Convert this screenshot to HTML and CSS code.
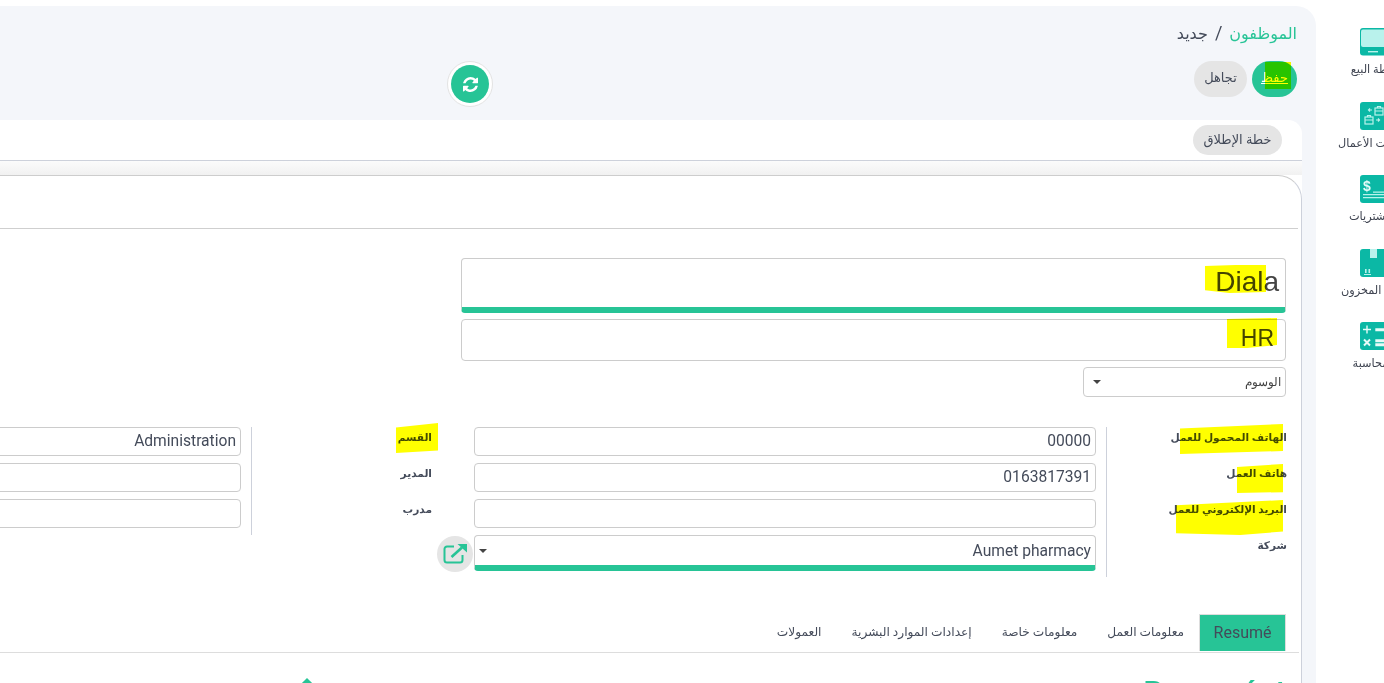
FILE: index.html
```html
<!DOCTYPE html>
<html lang="ar" dir="rtl">
<head>
<meta charset="utf-8">
<title>الموظفون</title>
<link rel="stylesheet" href="styles.css">
</head>
<body>
<div class="app">
  <nav class="side">
    <a class="app-item">
      <svg class="app-icon" viewBox="0 0 28 28"><rect width="28" height="27.500" rx="3" fill="#0bb8a5"/><rect x="1" y="1.500" width="26" height="17.500" rx="2" fill="#b9f2ec"/><rect x="8" y="23" width="10" height="1.400" fill="#b9f2ec"/></svg>
      <span>نقطة البيع</span>
    </a>
    <a class="app-item">
      <svg class="app-icon" viewBox="0 0 28 28"><rect width="28" height="28" rx="3" fill="#0bb8a5"/><g fill="none" stroke="#b9f2ec" stroke-width="1.200"><rect x="15" y="6" width="8" height="7"/><path d="M15 9h8M17.500 6V4.500h3V6"/><rect x="5" y="15" width="8" height="7"/><path d="M5 18h8M7.500 15v-1.500h3V15"/><path d="M12 8H8.500M10 6.500 8.500 8 10 9.500M16 18h3.500M18 16.500 19.500 18 18 19.500"/></g></svg>
      <span>عمليات الأعمال</span>
    </a>
    <a class="app-item">
      <svg class="app-icon" viewBox="0 0 28 28"><rect width="28" height="28" rx="3" fill="#0bb8a5"/><text class="dollar" x="3" y="16">$</text><path d="M3 19h22v1.300H3zM3 22h22v1.300H3zM13 16.500h12v1.300H13z" fill="#b9f2ec"/></svg>
      <span>المشتريات</span>
    </a>
    <a class="app-item">
      <svg class="app-icon" viewBox="0 0 28 28"><rect width="28" height="28" rx="3" fill="#0bb8a5"/><rect x="10" width="7" height="9" fill="#b9f2ec"/><path d="M5 20h1.600v4H5zM8.500 20h1.600v4H8.500zM4 25h7v1H4z" fill="#b9f2ec"/></svg>
      <span>إدارة المخزون</span>
    </a>
    <a class="app-item">
      <svg class="app-icon" viewBox="0 0 28 28"><rect width="28" height="28" rx="3" fill="#0bb8a5"/><path d="M7 3.500v8M3 7.500h8M16 7h9v1.600h-9zM16 18h9v1.600h-9zM16 22h9v1.600h-9z" stroke="#e5fbf8" stroke-width="1.400" fill="#e5fbf8"/><path d="M4 17.500l6 6M10 17.500l-6 6" stroke="#e5fbf8" stroke-width="2"/></svg>
      <span>المحاسبة</span>
    </a>
  </nav>

  <main class="panel">
    <header class="control">
      <h1 class="crumbs"><span class="crumb-link">الموظفون</span><span class="crumb-sep">/</span>جديد</h1>
      <div class="actions">
        <button class="pill pill-save">حفظ</button>
        <button class="pill pill-ghost">تجاهل</button>
        <button class="refresh">
          <svg viewBox="0 0 1536 1536" width="15" height="15"><path fill="#fff" d="M1511 928q0 5-1 7-64 268-268 434.500t-478 166.500q-146 0-282.500-55t-243.500-157l-129 129q-19 19-45 19t-45-19-19-45v-448q0-26 19-45t45-19h448q26 0 45 19t19 45-19 45l-137 137q71 66 161 102t187 36q134 0 250-65t186-179q11-17 53-117 8-23 30-23h192q13 0 22.500 9.500t9.500 22.500zm25-800v448q0 26-19 45t-45 19h-448q-26 0-45-19t-19-45 19-45l138-138q-148-137-349-137-134 0-250 65t-186 179q-11 17-53 117-8 23-30 23h-199q-13 0-22.500-9.500t-9.500-22.500v-7q65-268 270-434.500t480-166.500q146 0 284 55.500t245 156.500l130-129q19-19 45-19t45 19 19 45z"/></svg>
        </button>
      </div>
    </header>

    <section class="card">
      <div class="statusbar"><button class="pill-plan">خطة الإطلاق</button></div>
      <div class="strip">
        <div class="sheet">
          <div class="sheet-head"></div>
          <div class="sheet-body">
            <div class="field field-name">Diala</div>
            <div class="field field-job">HR</div>
            <div class="field field-tags"><span class="caret"></span><span>الوسوم</span></div>

            <div class="groups">
              <div class="group">
                <div class="labels">
                  <div class="lab">الهاتف المحمول للعمل</div>
                  <div class="lab">هاتف العمل</div>
                  <div class="lab">البريد الإلكتروني للعمل</div>
                  <div class="lab lab-tall">شركة</div>
                </div>
                <div class="inputs">
                  <div class="input">00000</div>
                  <div class="input">0163817391</div>
                  <div class="input"></div>
                  <div class="input input-company">
                    <span class="caret"></span><span>Aumet pharmacy</span>
                    <button class="open-link">
                      <svg viewBox="0 0 24 20" width="24" height="20"><path d="M11 2.500H4a2.500 2.500 0 0 0-2.500 2.500v11A2.500 2.500 0 0 0 4 18.500h13a2.500 2.500 0 0 0 2.500-2.500v-5" fill="none" stroke="#27c496" stroke-width="2"/><path d="M8.500 13 19 3.500" stroke="#27c496" stroke-width="2.600"/><path d="M14.500 0H24v8.500z" fill="#27c496"/></svg>
                    </button>
                  </div>
                </div>
              </div>
              <div class="group group-second">
                <div class="labels">
                  <div class="lab">القسم</div>
                  <div class="lab">المدير</div>
                  <div class="lab">مدرب</div>
                </div>
                <div class="inputs">
                  <div class="input">Administration</div>
                  <div class="input"></div>
                  <div class="input"></div>
                </div>
              </div>
            </div>

            <div class="tabs">
              <a class="tab tab-active">Resumé</a>
              <a class="tab">معلومات العمل</a>
              <a class="tab">معلومات خاصة</a>
              <a class="tab">إعدادات الموارد البشرية</a>
              <a class="tab">العمولات</a>
            </div>

            <div class="resume-row">
              <h2 class="resume-title">Resumént</h2>
              <span class="resume-mark"></span>
            </div>
          </div>
        </div>
      </div>
    </section>
  </main>
</div>

<div class="marks">
  <i class="mark mark-save"></i>
  <i class="mark mark-name"></i>
  <i class="mark mark-job"></i>
  <i class="mark mark-l1"></i>
  <i class="mark mark-l2"></i>
  <i class="mark mark-l3"></i>
  <i class="mark mark-dept"></i>
</div>
</body>
</html>
```
FILE: styles.css
```css
html, body { margin: 0; padding: 0; height: 683px; overflow: hidden; background: #fff; }
body { font-family: Roboto, "Liberation Sans", "DejaVu Sans", sans-serif; color: #444b5a; font-size: 13px; }
button { font-family: inherit; border: 0; padding: 0; cursor: pointer; }
h1, h2 { margin: 0; font-weight: 400; }

.app { display: flex; width: 1384px; height: 683px; overflow: hidden; }

/* app launcher column, cut by the window edge */
.side { flex: none; width: 68px; height: 683px; overflow: hidden; direction: ltr; padding-top: 28px; box-sizing: border-box; }
.app-item { display: flex; flex-direction: column; align-items: center; width: 116px; height: 73.5px; direction: rtl; }
.app-icon { width: 28px; height: 28px; flex: none; }
.app-item span { font-size: 11.300px; line-height: 14px; margin-top: 7px; white-space: nowrap; color: #3e4350; }
.dollar { font: 700 14px "Liberation Sans", sans-serif; fill: #e5fbf8; direction: ltr; }

.panel { flex: none; width: 1716px; margin-top: 6px; height: 677px; background: #f4f6fa; border-top-right-radius: 20px; overflow: hidden; }

.control { height: 114px; padding-right: 19px; box-sizing: border-box; }
.crumbs { font-size: 16px; line-height: 24px; padding-top: 15px; color: #444b5a; }
.crumb-link { color: #27c496; }
.crumb-sep { margin: 0 7px; font-size: 18px; }
.actions { display: flex; align-items: flex-start; margin-top: 15px; }
.pill { height: 36px; border-radius: 18px; font-size: 13px; color: #444b5a; padding-bottom: 4px; }
.pill-save { width: 45px; background: #27c496; color: #fff; text-decoration: underline; }
.pill-ghost { width: 53px; margin-right: 5px; background: #e5e5e5; }
.refresh { width: 46px; height: 46px; margin-right: 701px; border-radius: 50%; border: 1px solid #e3e3e3; background: #fff; display: flex; align-items: center; justify-content: center; position: relative; }
.refresh::before { content: ""; position: absolute; inset: 3px; border-radius: 50%; background: #27c496; }
.refresh svg { position: relative; }

.card { margin-right: 14px; background: #fff; border-top-right-radius: 14px; height: 563px; overflow: hidden; }
.statusbar { height: 35px; border-bottom: 1px solid #cdd1db; padding: 5px 20px 0 0; }
.pill-plan { width: 89px; height: 30px; border-radius: 15px; background: #e5e5e5; font-size: 13px; color: #444b5a; padding-bottom: 2px; }

.strip { padding-top: 14px; background: linear-gradient(#fbfbfb, #f1f1f1 14px, #fff 14px); }
.sheet { background: #fff; border-top: 1px solid #cdcdcd; border-right: 1px solid #cdd1db; border-top-right-radius: 24px; height: 520px; }
.sheet-head { height: 52px; border-bottom: 1px solid #cfcfcf; margin-right: 3px; }
.sheet-body { padding: 29px 15px 0 0; }

.field { border: 1px solid #ccc; border-radius: 4px; box-sizing: border-box; background: #fff; font-family: "Liberation Sans", sans-serif; color: #444; }
.field-name { height: 55px; width: 825px; font-size: 28px; line-height: 46px; padding: 0 6px 0 0; border-bottom: 6px solid #27c496; }
.field-job { height: 42px; width: 825px; margin-top: 6px; font-size: 23px; line-height: 36px; padding: 0 11px 0 0; }
.field-tags { display: flex; align-items: center; justify-content: space-between; height: 30px; width: 203px; margin-top: 6px; font-size: 11.500px; padding: 0 4px 0 9px; }
.field-tags .caret { order: 2; }

.caret { width: 0; height: 0; border: 4px solid transparent; border-top-color: #444; border-bottom: 0; flex: none; }

.groups { display: flex; align-items: flex-start; margin-top: 30px; }
.group { display: flex; flex: none; margin-right: -1px; }
.group-second { margin-right: 42px; }
.labels { width: 181px; border-left: 1px solid #cdd1db; box-sizing: border-box; }
.lab { height: 29px; margin-bottom: 7px; font-size: 10.600px; font-weight: 700; line-height: 22px; }
.lab-tall { height: 35px; }
.inputs { width: 622px; margin-right: 10px; display: flex; flex-direction: column; gap: 7px; }
.input { height: 29px; border: 1px solid #ccc; border-radius: 4px; box-sizing: border-box; padding: 0 4px; font-size: 15.600px; line-height: 26px; color: #444b5a; }
.input-company { height: 36px; border-bottom: 6px solid #27c496; position: relative; display: flex; align-items: center; justify-content: space-between; line-height: normal; }
.input-company .caret { order: 2; }
.open-link { position: absolute; right: calc(100% + 2px); top: 0; width: 36px; height: 36px; border-radius: 50%; background: #e5e5e5; display: flex; align-items: center; justify-content: center; }

.tabs { display: flex; margin: 37px -13px 0 0; padding-right: 13px; height: 38px; border-bottom: 1px solid #ddd; }
.tab { padding: 0 15px; line-height: 36px; font-size: 12.200px; color: #444b5a; white-space: nowrap; }
.tab-active { background: #27c496; font-size: 16px; border: 1px solid #ddd; border-bottom: 0; padding: 0 13.500px; height: 37px; box-sizing: border-box; }

.resume-row { display: flex; align-items: flex-start; padding-top: 26px; }
.resume-title { font-size: 31.500px; font-weight: 500; line-height: 28px; color: #27c496; direction: ltr; }
.resume-mark { width: 10px; height: 10px; margin-right: 831px; margin-top: 1px; background: #27c496; transform: rotate(45deg); }

/* highlighter strokes drawn over the screenshot */
.mark { position: absolute; display: block; background: #ff0; mix-blend-mode: multiply; }
.mark-save { left: 1265px; top: 62px; width: 26px; height: 27px; }
.mark-name { left: 1205px; top: 265px; width: 61px; height: 28px; clip-path: polygon(0 4%, 50% 0, 100% 0, 100% 96%, 40% 100%, 0 90%); }
.mark-job { left: 1227px; top: 318px; width: 50px; height: 30px; clip-path: polygon(0 3%, 100% 0, 100% 90%, 40% 100%, 0 100%); }
.mark-l1 { left: 1180px; top: 424px; width: 103px; height: 30px; clip-path: polygon(0 15%, 100% 0, 100% 90%, 0 100%); }
.mark-l2 { left: 1237px; top: 464px; width: 46px; height: 29px; clip-path: polygon(0 10%, 100% 0, 100% 97%, 0 100%); }
.mark-l3 { left: 1176px; top: 500px; width: 107px; height: 35px; clip-path: polygon(0 15%, 100% 0, 100% 90%, 60% 100%, 0 95%); }
.mark-dept { left: 396px; top: 423px; width: 42px; height: 30px; clip-path: polygon(0 15%, 100% 0, 100% 92%, 0 100%); }
```
